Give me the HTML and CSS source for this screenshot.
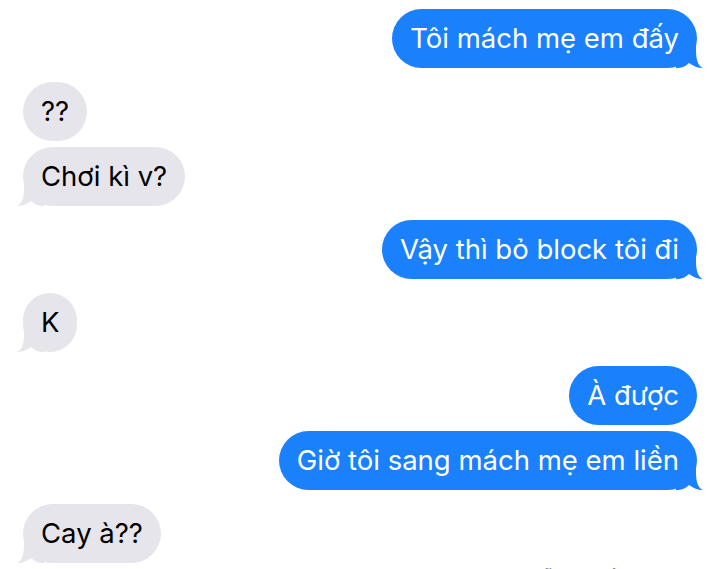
FILE: index.html
```html
<!DOCTYPE html>
<html lang="vi">
<head>
    <meta charset="UTF-8">
    <meta name="viewport" content="width=device-width, initial-scale=1.0">
    <title>Tin nhắn</title>
    <link rel="stylesheet" href="styles.css">
</head>
<body>

    <div id="thread">
        <div class="bubble sent">Tôi mách mẹ em đấy
            <svg class="tail" viewBox="0 0 28 30"><path d="M0 0 H20 V12 C20 22 22 28 27 30 C22 30 17 28 13 25 C10 28 6 30 0 30 Z"/></svg>
        </div>

        <div class="group">
            <div class="bubble received">??</div>
            <div class="bubble received">Chơi kì v?
                <svg class="tail" viewBox="0 0 28 30"><path d="M0 0 H20 V12 C20 22 22 28 27 30 C22 30 17 28 13 25 C10 28 6 30 0 30 Z"/></svg>
            </div>
        </div>

        <div class="bubble sent">Vậy thì bỏ block tôi đi
            <svg class="tail" viewBox="0 0 28 30"><path d="M0 0 H20 V12 C20 22 22 28 27 30 C22 30 17 28 13 25 C10 28 6 30 0 30 Z"/></svg>
        </div>

        <div class="bubble received">K
            <svg class="tail" viewBox="0 0 28 30"><path d="M0 0 H20 V12 C20 22 22 28 27 30 C22 30 17 28 13 25 C10 28 6 30 0 30 Z"/></svg>
        </div>

        <div class="group">
            <div class="bubble sent">À được</div>
            <div class="bubble sent">Giờ tôi sang mách mẹ em liền
                <svg class="tail" viewBox="0 0 28 30"><path d="M0 0 H20 V12 C20 22 22 28 27 30 C22 30 17 28 13 25 C10 28 6 30 0 30 Z"/></svg>
            </div>
        </div>

        <div class="bubble received">Cay à??
            <svg class="tail" viewBox="0 0 28 30"><path d="M0 0 H20 V12 C20 22 22 28 27 30 C22 30 17 28 13 25 C10 28 6 30 0 30 Z"/></svg>
        </div>

        <div class="status">Đã xem lúc 21:14</div>
    </div>

</body>
</html>
```

FILE: styles.css
```css
html,
body {
    margin: 0;
    padding: 0;
    background-color: #ffffff;
    overflow: hidden;
}

body {
    font-family: Inter, 'Noto Sans', sans-serif;
    height: 569px;
}

#thread {
    display: flex;
    flex-direction: column;
    gap: 14px;
    padding: 9px 22px 0 23px;
}

.group {
    display: flex;
    flex-direction: column;
    gap: 6px;
}

.bubble {
    position: relative;
    z-index: 0;
    font-size: 27.5px;
    line-height: 35px;
    padding: 12px 18px;
    border-radius: 30px;
    max-width: 80%;
}

.sent {
    align-self: flex-end;
    background-color: #1a80fb;
    color: #ffffff;
}

.received {
    align-self: flex-start;
    background-color: #e6e5eb;
    color: #000000;
}

/* đuôi bong bóng, nằm sau chữ */
.tail {
    position: absolute;
    z-index: -1;
    bottom: 0;
    width: 28px;
    height: 30px;
}

.sent .tail {
    right: -7px;
    fill: #1a80fb;
}

.received .tail {
    left: -7px;
    fill: #e6e5eb;
    transform: scaleX(-1);
}

.status {
    align-self: flex-end;
    margin-top: -12px;
    margin-right: 16px;
    font-size: 19px;
    font-weight: 600;
    color: #8e8e93;
}
```
